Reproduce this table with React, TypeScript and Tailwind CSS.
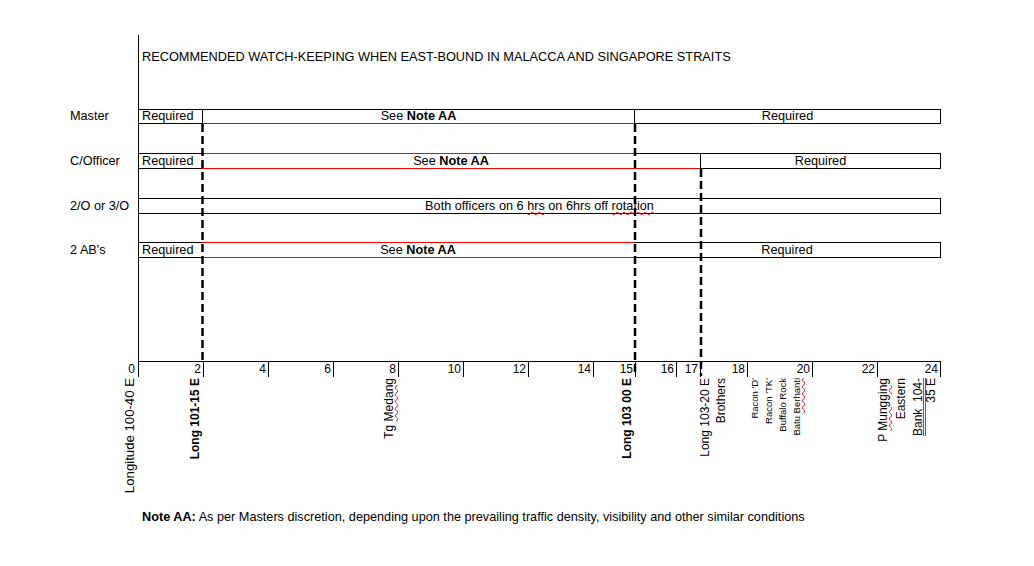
import React from "react";

const RED = "border-[#ff0000]";

// axis intervals, each ends in a tick on its right edge
const intervals = [
  { label: "2", w: "w-[65px]" },
  { label: "4", w: "w-[65px]" },
  { label: "6", w: "w-[65px]" },
  { label: "8", w: "w-[65px]" },
  { label: "10", w: "w-[65px]" },
  { label: "12", w: "w-[65px]" },
  { label: "14", w: "w-[65px]" },
  { label: "15", w: "w-[42px]" },
  { label: "16", w: "w-[41px]" },
  { label: "17", w: "w-[24px]" },
  { label: "18", w: "w-[47px]" },
  { label: "20", w: "w-[65px]" },
  { label: "22", w: "w-[65px]" },
  { label: "24", w: "w-[63px]" },
];

function Spell({ children }: { children: React.ReactNode }) {
  return <span className="underline decoration-wavy decoration-[#ff0000] decoration-1 underline-offset-1">{children}</span>;
}

function SeeNote() {
  return (
    <>
      See <b>Note AA</b>
    </>
  );
}

// rotated label, reads bottom to top, top end sits under the axis
function VLabel({ className, children }: { className: string; children: React.ReactNode }) {
  return (
    <div className={`absolute top-[1px] w-0 ${className}`}>
      <span className="absolute right-0 top-0 origin-top-right -rotate-90 whitespace-pre">{children}</span>
    </div>
  );
}

export default function App() {
  return (
    <div className="relative w-[1034px] h-[566px] overflow-hidden bg-white text-black font-['Liberation_Sans',Arial,sans-serif]">
      <div className="flex pt-[35px]">
        {/* Row names */}
        <div className="w-[138px] shrink-0 text-[12.7px]">
          <div className="h-[74px]" />
          <div className="h-[15px] leading-[15px] pl-[70px]">Master</div>
          <div className="mt-[29px] h-[16px] leading-[16px] pl-[70px]">C/Officer</div>
          <div className="mt-[29px] h-[16px] leading-[16px] pl-[70px]">2/O or 3/O</div>
          <div className="mt-[28px] h-[16px] leading-[16px] pl-[70px]">2 AB's</div>
          <div className="mt-[104px] h-[15px] leading-[15px] text-right pr-[3px] text-[12px]">0</div>
        </div>

        {/* Chart */}
        <div className="w-[803px] shrink-0 border-l border-black text-[12.7px]">
          <div className="h-[74px] pt-[14px] pl-[3px] text-[12.75px] leading-[16px]">
            RECOMMENDED WATCH-KEEPING WHEN EAST-BOUND IN MALACCA AND SINGAPORE STRAITS
          </div>

          {/* Master */}
          <div className="flex h-[15px] leading-[13px]">
            <div className="w-[63px] border-y border-black pl-[3px]">Required</div>
            <div className="w-[432px] border-l border-t border-b border-l-black border-t-black border-b-[#ff0000] text-center">
              <SeeNote />
            </div>
            <div className="flex-1 border border-black text-center">Required</div>
          </div>

          {/* C/Officer */}
          <div className="mt-[29px] flex h-[16px] leading-[14px]">
            <div className="w-[63px] border-y border-black pl-[3px]">Required</div>
            <div className="w-[498px] flex flex-col">
              <div className="flex h-px">
                <div className="w-[432px] bg-[#ff0000]" />
                <div className="flex-1 bg-black" />
              </div>
              <div className="flex-1 text-center">
                <SeeNote />
              </div>
              <div className="h-px bg-[#ff0000]" />
            </div>
            <div className="flex-1 border border-black text-center">Required</div>
          </div>

          {/* 2/O or 3/O */}
          <div className="mt-[29px] h-[16px] leading-[14px] border-y border-r border-black text-center">
            Both officers on 6 <Spell>hrs</Spell> on 6hrs off <Spell>rotation</Spell>
          </div>

          {/* 2 AB's */}
          <div className="mt-[28px] flex h-[16px] leading-[14px]">
            <div className="w-[63px] border-y border-black pl-[3px]">Required</div>
            <div className={`w-[432px] border-y ${RED} text-center`}>
              <SeeNote />
            </div>
            <div className="flex-1 border-y border-r border-black text-center">Required</div>
          </div>

          {/* Axis */}
          <div className="mt-[103px] flex h-[16px] border-t border-black text-[12px] leading-[15px]">
            {intervals.map((t) => (
              <div key={t.label} className={`${t.w} h-[15px] shrink-0 border-r border-black text-right pr-[2px]`}>
                {t.label}
              </div>
            ))}
          </div>
        </div>
      </div>

      {/* Positions along the strait */}
      <div className="relative h-[133px] text-[12px] leading-[14px]">
        <VLabel className="left-[122px] text-[13.2px] leading-[15px]">Longitude 100-40 E</VLabel>
        <VLabel className="left-[188px] font-bold">Long 101-15 E</VLabel>
        <VLabel className="left-[382px]">
          Tg <Spell>Medang</Spell>
        </VLabel>
        <VLabel className="left-[620px] font-bold">Long 103 00 E</VLabel>
        <VLabel className="left-[698px]">Long 103-20 E</VLabel>
        <VLabel className="left-[714px]">Brothers</VLabel>
        <VLabel className="left-[749px] text-[9.5px] leading-[11px]">Racon 'D'</VLabel>
        <VLabel className="left-[763px] text-[9.5px] leading-[11px]">Racon 'TK'</VLabel>
        <VLabel className="left-[777px] text-[9.5px] leading-[11px]">Buffalo Rock</VLabel>
        <VLabel className="left-[791px] text-[9.5px] leading-[11px]">
          Batu <Spell>Berhanti</Spell>
        </VLabel>
        <VLabel className="left-[876px]">
          P <Spell>Mungging</Spell>
        </VLabel>
        <VLabel className="left-[894px]">Eastern</VLabel>
        <VLabel className="left-[911px]">
          <span className="underline decoration-double decoration-[#1f5fe0] decoration-1 underline-offset-1">Bank  104-</span>
        </VLabel>
        <VLabel className="left-[924px]">35 E</VLabel>
      </div>

      <div className="pl-[142px] text-[12.7px] leading-[15px]">
        <b>Note AA:</b> As per Masters discretion, depending upon the prevailing traffic density, visibility and other similar conditions
      </div>

      {/* Dashed boundaries */}
      <svg className="pointer-events-none absolute left-0 top-0" width="1034" height="566">
        <g stroke="#000" strokeWidth="2.5" strokeDasharray="8 4">
          <line x1="202.5" y1="124" x2="202.5" y2="361" />
          <line x1="635" y1="124" x2="635" y2="376" />
          <line x1="701" y1="169" x2="701" y2="376" />
        </g>
      </svg>
    </div>
  );
}
